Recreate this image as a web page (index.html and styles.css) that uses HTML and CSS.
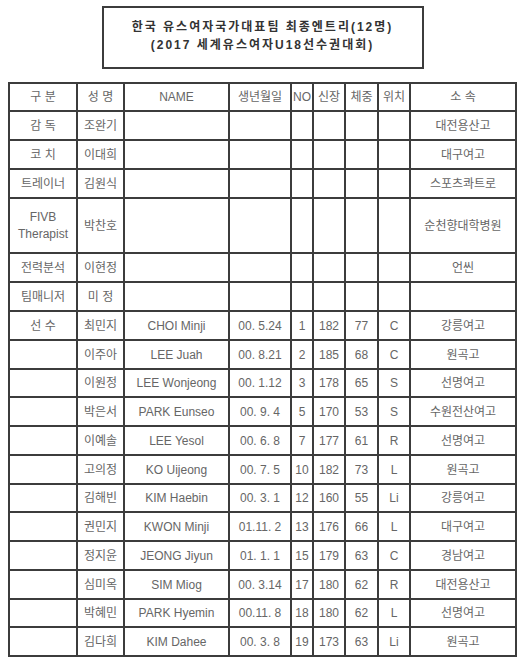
FILE: index.html
```html
<!DOCTYPE html>
<html lang="ko">
<head>
<meta charset="utf-8">
<title>한국 유스여자국가대표팀 최종엔트리</title>
<link rel="stylesheet" href="styles.css">
</head>
<body>
<div class="page">
  <div class="title-box">
    <div class="title-line">한국 유스여자국가대표팀 최종엔트리(12명)</div>
    <div class="title-line">(2017 세계유스여자U18선수권대회)</div>
  </div>

  <div class="roster">
    <div class="c">구 분</div><div class="c">성 명</div><div class="c">NAME</div><div class="c">생년월일</div><div class="c">NO</div><div class="c">신장</div><div class="c">체중</div><div class="c">위치</div><div class="c">소 속</div>

    <div class="c">감 독</div><div class="c">조완기</div><div class="c"></div><div class="c"></div><div class="c"></div><div class="c"></div><div class="c"></div><div class="c"></div><div class="c">대전용산고</div>
    <div class="c">코 치</div><div class="c">이대희</div><div class="c"></div><div class="c"></div><div class="c"></div><div class="c"></div><div class="c"></div><div class="c"></div><div class="c">대구여고</div>
    <div class="c">트레이너</div><div class="c">김원식</div><div class="c"></div><div class="c"></div><div class="c"></div><div class="c"></div><div class="c"></div><div class="c"></div><div class="c">스포츠콰트로</div>
    <div class="c two">FIVB<br>Therapist</div><div class="c">박찬호</div><div class="c"></div><div class="c"></div><div class="c"></div><div class="c"></div><div class="c"></div><div class="c"></div><div class="c">순천향대학병원</div>
    <div class="c">전력분석</div><div class="c">이현정</div><div class="c"></div><div class="c"></div><div class="c"></div><div class="c"></div><div class="c"></div><div class="c"></div><div class="c">언씬</div>
    <div class="c">팀매니저</div><div class="c">미 정</div><div class="c"></div><div class="c"></div><div class="c"></div><div class="c"></div><div class="c"></div><div class="c"></div><div class="c"></div>

    <div class="c">선 수</div><div class="c">최민지</div><div class="c">CHOI Minji</div><div class="c">00. 5.24</div><div class="c">1</div><div class="c">182</div><div class="c">77</div><div class="c">C</div><div class="c">강릉여고</div>
    <div class="c"></div><div class="c">이주아</div><div class="c">LEE Juah</div><div class="c">00. 8.21</div><div class="c">2</div><div class="c">185</div><div class="c">68</div><div class="c">C</div><div class="c">원곡고</div>
    <div class="c"></div><div class="c">이원정</div><div class="c">LEE Wonjeong</div><div class="c">00. 1.12</div><div class="c">3</div><div class="c">178</div><div class="c">65</div><div class="c">S</div><div class="c">선명여고</div>
    <div class="c"></div><div class="c">박은서</div><div class="c">PARK Eunseo</div><div class="c">00. 9. 4</div><div class="c">5</div><div class="c">170</div><div class="c">53</div><div class="c">S</div><div class="c">수원전산여고</div>
    <div class="c"></div><div class="c">이예솔</div><div class="c">LEE Yesol</div><div class="c">00. 6. 8</div><div class="c">7</div><div class="c">177</div><div class="c">61</div><div class="c">R</div><div class="c">선명여고</div>
    <div class="c"></div><div class="c">고의정</div><div class="c">KO Uijeong</div><div class="c">00. 7. 5</div><div class="c">10</div><div class="c">182</div><div class="c">73</div><div class="c">L</div><div class="c">원곡고</div>
    <div class="c"></div><div class="c">김해빈</div><div class="c">KIM Haebin</div><div class="c">00. 3. 1</div><div class="c">12</div><div class="c">160</div><div class="c">55</div><div class="c">Li</div><div class="c">강릉여고</div>
    <div class="c"></div><div class="c">권민지</div><div class="c">KWON Minji</div><div class="c">01.11. 2</div><div class="c">13</div><div class="c">176</div><div class="c">66</div><div class="c">L</div><div class="c">대구여고</div>
    <div class="c"></div><div class="c">정지윤</div><div class="c">JEONG Jiyun</div><div class="c">01. 1. 1</div><div class="c">15</div><div class="c">179</div><div class="c">63</div><div class="c">C</div><div class="c">경남여고</div>
    <div class="c"></div><div class="c">심미옥</div><div class="c">SIM Miog</div><div class="c">00. 3.14</div><div class="c">17</div><div class="c">180</div><div class="c">62</div><div class="c">R</div><div class="c">대전용산고</div>
    <div class="c"></div><div class="c">박혜민</div><div class="c">PARK Hyemin</div><div class="c">00.11. 8</div><div class="c">18</div><div class="c">180</div><div class="c">62</div><div class="c">L</div><div class="c">선명여고</div>
    <div class="c"></div><div class="c">김다희</div><div class="c">KIM Dahee</div><div class="c">00. 3. 8</div><div class="c">19</div><div class="c">173</div><div class="c">63</div><div class="c">Li</div><div class="c">원곡고</div>
  </div>
</div>
</body>
</html>
```

FILE: styles.css
```css
html, body {
  margin: 0;
  padding: 0;
  background: #ffffff;
}

body {
  font-family: "Liberation Sans", "Noto Sans CJK KR", sans-serif;
  font-size: 12px;
  color: #666666;
}

.page {
  width: 509px;
  padding: 6px 0 0 8px;
}

.title-box {
  box-sizing: border-box;
  width: 322px;
  height: 63px;
  margin: 0 auto;
  border: 2px solid #3c3c3c;
  padding-top: 10px;
  text-align: center;
}

.title-line {
  font-weight: bold;
  font-size: 12px;
  line-height: 18px;
  letter-spacing: 2px;
  color: #333333;
  white-space: nowrap;
}

.roster {
  margin-top: 13px;
  display: grid;
  grid-template-columns: 68px 47px 105px 62px 22px 32px 33px 32px 106px;
  grid-template-rows: 28px 29px 29px 29px 55px 29px 29px 29px 29px 28px 29px 29px 29px 28px 29px 29px 29px 28px 29px;
  border-left: 2px solid #3c3c3c;
  border-top: 2px solid #3c3c3c;
  width: 507px;
}

.c {
  box-sizing: border-box;
  border-right: 2px solid #3c3c3c;
  border-bottom: 2px solid #3c3c3c;
  display: flex;
  align-items: center;
  justify-content: center;
  text-align: center;
  white-space: pre;
  line-height: 15px;
  padding-top: 1px;
}

.c.two {
  white-space: normal;
  line-height: 17px;
}
```
